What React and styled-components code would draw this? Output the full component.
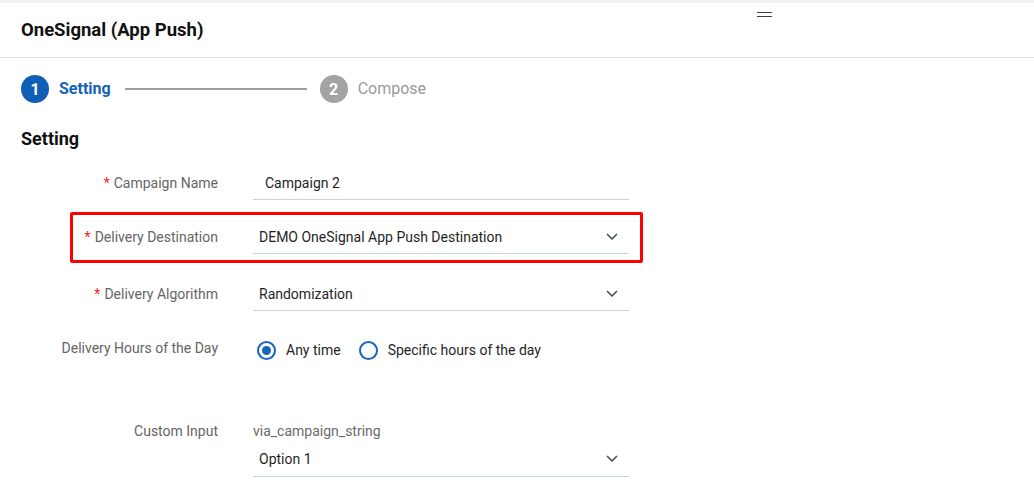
import React from "react";
import styled, { createGlobalStyle, css } from "styled-components";

const GlobalStyle = createGlobalStyle`
  html, body { margin: 0; padding: 0; background: #ffffff; }
  body { font-family: Roboto, "Liberation Sans", Arial, sans-serif; color: #1f1f1f; }
  * { box-sizing: border-box; }
`;

const Page = styled.div`
  width: 1034px;
  min-height: 498px;
  background: #fff;
`;

const TopStrip = styled.div`
  height: 3px;
  background: #f0f2f5;
`;

const Header = styled.header`
  position: relative;
  height: 55px;
  padding: 0 21px;
  display: flex;
  align-items: center;
  border-bottom: 1px solid #e3e3e3;
`;

const Title = styled.h1`
  margin: 0;
  font-size: 18.5px;
  font-weight: 700;
  color: #111;
  line-height: 24px;
`;

const DragHandle = styled.span`
  position: absolute;
  left: 757px;
  top: 9px;
  width: 15px;
  height: 5px;
  border-top: 1.5px solid #3e3e44;
  border-bottom: 1.5px solid #3e3e44;
`;

const Body = styled.main`
  padding: 17px 21px 0;
`;

const Stepper = styled.div`
  display: flex;
  align-items: center;
  height: 28px;
`;

const Step = styled.div`
  display: flex;
  align-items: center;
  gap: 10px;
`;

const StepCircle = styled.span`
  width: 28px;
  height: 28px;
  border-radius: 50%;
  display: inline-flex;
  align-items: center;
  justify-content: center;
  font-size: 16px;
  font-weight: 700;
  color: #fff;
  background: ${(p) => (p.$active ? "#0f5fb6" : "#a3a3a3")};
`;

const StepLabel = styled.span`
  font-size: 16px;
  line-height: 20px;
  font-weight: ${(p) => (p.$active ? 700 : 400)};
  color: ${(p) => (p.$active ? "#1662b8" : "#999999")};
`;

const StepLine = styled.span`
  width: 182px;
  height: 2px;
  margin: 0 13px 0 14px;
  background: #9e9e9e;
`;

const SectionTitle = styled.h2`
  margin: 24px 0 16px;
  font-size: 18px;
  line-height: 24px;
  font-weight: 700;
  color: #111;
`;

const Form = styled.div`
  display: flex;
  flex-direction: column;
  align-items: flex-start;
`;

const Row = styled.div`
  position: relative;
  display: grid;
  grid-template-columns: 197px 376px;
  column-gap: 35px;
  align-items: start;
  margin-top: ${(p) => p.$mt || 0}px;
  ${(p) =>
    p.$highlight &&
    css`
      &::after {
        content: "";
        position: absolute;
        left: 49px;
        right: -14px;
        top: -9px;
        bottom: -9px;
        border: 3px solid #ff0000;
        border-radius: 2px;
        pointer-events: none;
      }
    `}
`;

const Label = styled.label`
  text-align: right;
  font-size: 14px;
  color: #656565;
  line-height: ${(p) => p.$lh || 33}px;
  white-space: nowrap;
`;

const Req = styled.span`
  color: #f5222d;
  margin-right: 4px;
`;

const Field = styled.div`
  display: flex;
  flex-direction: column;
`;

const TextInput = styled.input`
  width: 100%;
  height: 33px;
  border: none;
  border-bottom: 1px solid #c3d3e6;
  padding: 0 12px;
  font-family: inherit;
  font-size: 14px;
  color: #1f1f1f;
  background: transparent;
  outline: none;
`;

const Select = styled.div`
  width: 100%;
  height: ${(p) => p.$h || 33}px;
  padding: ${(p) => (p.$h ? "0 11px 2px 6px" : "0 11px 0 6px")};
  display: flex;
  align-items: center;
  justify-content: space-between;
  border-bottom: 1px solid #c3d3e6;
  font-size: 14px;
  color: #1f1f1f;
  cursor: pointer;
`;

const ValueLabel = styled.div`
  font-size: 14px;
  line-height: 20px;
  color: #6b6b6b;
  margin-bottom: 2px;
`;

const RadioGroup = styled.div`
  display: flex;
  align-items: center;
  height: 32px;
  padding-left: 4px;
  gap: 18px;
`;

const RadioOption = styled.label`
  display: flex;
  align-items: center;
  gap: 10px;
  font-size: 14px;
  color: #1f1f1f;
  cursor: pointer;
`;

const RadioCircle = styled.span`
  width: 19px;
  height: 19px;
  border-radius: 50%;
  border: 2px solid #1565c0;
  display: inline-flex;
  align-items: center;
  justify-content: center;
  &::after {
    content: "";
    width: 9px;
    height: 9px;
    border-radius: 50%;
    background: ${(p) => (p.$checked ? "#1565c0" : "transparent")};
  }
`;

const Chevron = () => (
  <svg width="12" height="8" viewBox="0 0 12 8" fill="none">
    <path d="M1.5 1.5 L6 6 L10.5 1.5" stroke="#4a5463" strokeWidth="1.7" strokeLinecap="round" strokeLinejoin="round" />
  </svg>
);

export default function App() {
  return (
    <>
      <GlobalStyle />
      <Page>
        <TopStrip />
        <Header>
          <Title>OneSignal (App Push)</Title>
          <DragHandle />
        </Header>
        <Body>
          <Stepper>
            <Step>
              <StepCircle $active>1</StepCircle>
              <StepLabel $active>Setting</StepLabel>
            </Step>
            <StepLine />
            <Step>
              <StepCircle>2</StepCircle>
              <StepLabel>Compose</StepLabel>
            </Step>
          </Stepper>
          <SectionTitle>Setting</SectionTitle>
          <Form>
            <Row>
              <Label><Req>*</Req>Campaign Name</Label>
              <Field>
                <TextInput defaultValue="Campaign 2" />
              </Field>
            </Row>
            <Row $mt={21} $highlight>
              <Label><Req>*</Req>Delivery Destination</Label>
              <Field>
                <Select>
                  <span>DEMO OneSignal App Push Destination</span>
                  <Chevron />
                </Select>
              </Field>
            </Row>
            <Row $mt={24}>
              <Label><Req>*</Req>Delivery Algorithm</Label>
              <Field>
                <Select>
                  <span>Randomization</span>
                  <Chevron />
                </Select>
              </Field>
            </Row>
            <Row $mt={23}>
              <Label $lh={28}>Delivery Hours of the Day</Label>
              <RadioGroup>
                <RadioOption>
                  <RadioCircle $checked />
                  Any time
                </RadioOption>
                <RadioOption>
                  <RadioCircle />
                  Specific hours of the day
                </RadioOption>
              </RadioGroup>
            </Row>
            <Row $mt={55}>
              <Label $lh={20}>Custom Input</Label>
              <Field>
                <ValueLabel>via_campaign_string</ValueLabel>
                <Select $h={34}>
                  <span>Option 1</span>
                  <Chevron />
                </Select>
              </Field>
            </Row>
          </Form>
        </Body>
      </Page>
    </>
  );
}
